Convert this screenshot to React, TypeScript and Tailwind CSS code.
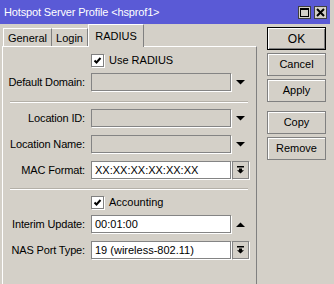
import React from "react";

function Checkbox() {
  return (
    <div className="w-[13px] h-[13px] bg-white border border-[#808080] shadow-[1px_1px_0_#fff] flex items-center justify-center shrink-0">
      <svg width="9" height="9" viewBox="0 0 9 9">
        <polyline points="1.5,4.5 3.5,6.5 7.5,2" fill="none" stroke="#000" strokeWidth="2" />
      </svg>
    </div>
  );
}

function Field({ label, value, white, tail }: { label: string; value?: string; white?: boolean; tail?: "down" | "up" | "btn" | null }) {
  return (
    <div className="flex items-center h-[18px]">
      <div className="w-[82px] text-right tracking-[-0.15px] shrink-0">{label}</div>
      <div
        className={
          "ml-[6px] w-[140px] h-[18px] border border-[#848484] shadow-[1px_1px_0_#fff] flex items-center pl-[3px] shrink-0 " +
          (white ? "bg-white" : "bg-[#d4d0c8]")
        }
      >
        {value}
      </div>
      {tail === "down" && (
        <div className="w-[18px] h-[18px] flex items-center justify-center">
          <svg width="9" height="5" viewBox="0 0 9 5">
            <path d="M0 0h9L4.5 4.5z" fill="#000" />
          </svg>
        </div>
      )}
      {tail === "up" && (
        <div className="w-[18px] h-[18px] flex items-center justify-center">
          <svg width="9" height="5" viewBox="0 0 9 5">
            <path d="M0 5h9L4.5 0.5z" fill="#000" />
          </svg>
        </div>
      )}
      {tail === "btn" && (
        <div className="ml-[1px] w-[17px] h-[18px] border border-[#848484] shadow-[1px_1px_0_#fff] flex items-center justify-center bg-[#d4d0c8]">
          <svg width="7" height="8" viewBox="0 0 7 8">
            <path d="M0 0h7v1.4H0z M2 2.4h3v1.8h2L3.5 7.6 0 4.2h2z" fill="#000" />
          </svg>
        </div>
      )}
    </div>
  );
}

function Sep() {
  return (
    <div className="ml-[7px] w-[238px]">
      <div className="h-[1px] bg-[#b4b0a8]" />
      <div className="h-[1px] bg-white" />
    </div>
  );
}

function Btn({ children, def, className }: { children: React.ReactNode; def?: boolean; className?: string }) {
  return (
    <div
      className={
        "w-[59px] h-[23px] flex items-center justify-center bg-[#d4d0c8] " +
        (def
          ? "border border-black shadow-[inset_1px_1px_0_#fff,inset_-1px_-1px_0_#808080] "
          : "border border-[#808080] shadow-[inset_1px_1px_0_#fff] ") +
        (className || "")
      }
    >
      {children}
    </div>
  );
}

export default function App() {
  return (
    <div className="w-[334px] h-[284px] bg-[#d4d0c8] overflow-hidden font-['Liberation_Sans',Arial,sans-serif] text-[11px] text-black">
      <div className="h-[24px] w-[330px] bg-[#5a5ad6] flex items-center pl-[4px] pr-[3px]">
        <span className="text-white flex-1 tracking-[-0.15px]">Hotspot Server Profile &lt;hsprof1&gt;</span>
        <div className="flex gap-[3px]">
          <div className="w-[13px] h-[13px] bg-[#d4d0c8] border border-[#404040] flex items-center justify-center">
            <svg width="9" height="9" viewBox="0 0 9 9">
              <rect x="0.5" y="0.5" width="8" height="8" fill="none" stroke="#000" />
              <rect x="0" y="0" width="9" height="2" fill="#000" />
            </svg>
          </div>
          <div className="w-[13px] h-[13px] bg-[#d4d0c8] border border-[#404040] flex items-center justify-center">
            <svg width="9" height="9" viewBox="0 0 9 9">
              <path d="M1 1L8 8M8 1L1 8" stroke="#000" strokeWidth="2" />
            </svg>
          </div>
        </div>
      </div>
      <div className="flex">
        <div className="w-[257px]">
          <div className="h-[22px] flex items-end pl-[3px]">
            <div className="w-[49px] h-[18px] border-t border-l border-r border-t-white border-l-white border-r-[#808080] flex items-center justify-center pt-[1px]">
              General
            </div>
            <div className="w-[36px] h-[18px] border-t border-r border-t-white border-r-[#808080] flex items-center justify-center pt-[1px]">
              Login
            </div>
            <div className="relative z-10 -mb-[1px] w-[56px] h-[23px] bg-[#d4d0c8] border-t border-l border-r border-t-white border-l-white border-r-[#808080] flex justify-center pt-[3px]">
              RADIUS
            </div>
          </div>
          <div className="ml-[2px] h-[238px] border-t border-l border-r border-t-white border-l-white border-r-[#808080] pt-[7px]">
            <div className="flex items-center h-[13px] pl-[88px]">
              <Checkbox />
              <span className="ml-[5px]">Use RADIUS</span>
            </div>
            <div className="mt-[6px]">
              <Field label="Default Domain:" tail="down" />
            </div>
            <div className="mt-[10px]">
              <Sep />
            </div>
            <div className="mt-[6px]">
              <Field label="Location ID:" tail="down" />
            </div>
            <div className="mt-[8px]">
              <Field label="Location Name:" tail="down" />
            </div>
            <div className="mt-[8px]">
              <Field label="MAC Format:" white value="XX:XX:XX:XX:XX:XX" tail="btn" />
            </div>
            <div className="mt-[9px]">
              <Sep />
            </div>
            <div className="mt-[6px] flex items-center h-[13px] pl-[88px]">
              <Checkbox />
              <span className="ml-[5px]">Accounting</span>
            </div>
            <div className="mt-[6px]">
              <Field label="Interim Update:" white value="00:01:00" tail="up" />
            </div>
            <div className="mt-[8px]">
              <Field label="NAS Port Type:" white value="19 (wireless-802.11)" tail="btn" />
            </div>
          </div>
        </div>
        <div className="flex flex-col pl-[10px] pt-[3px]">
          <Btn def className="text-[12px]">OK</Btn>
          <Btn className="mt-[3px]">Cancel</Btn>
          <Btn className="mt-[3px]">Apply</Btn>
          <Btn className="mt-[9px]">Copy</Btn>
          <Btn className="mt-[3px]">Remove</Btn>
        </div>
      </div>
    </div>
  );
}
